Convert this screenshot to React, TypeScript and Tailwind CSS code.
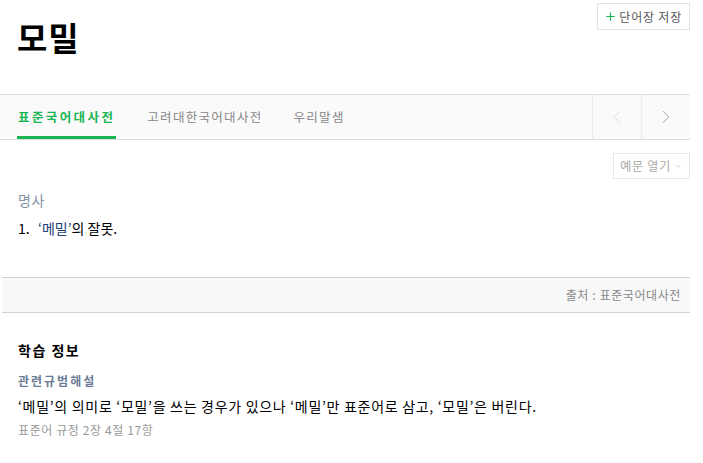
import { ChevronLeft, ChevronRight, ChevronDown, Plus } from 'lucide-react';

const font = { fontFamily: '"Noto Sans CJK KR", "Noto Sans", sans-serif' };

function App() {
    return (
        <div className="w-[690px] bg-white text-black" style={font}>
            {/* header */}
            <div className="h-[94px] relative">
                <h1 className="pl-[17px] pt-[13px] text-[33px] font-bold leading-[48px] tracking-[1px]">모밀</h1>
                <button className="absolute right-0 top-[3px] h-[27px] pl-[6px] pr-[7px] border border-[#e2e2e2] flex items-center gap-[2px] text-[12px] text-[#555] tracking-[0.8px]">
                    <Plus className="w-[13px] h-[13px] text-[#19b552]" strokeWidth={2} />
                    단어장 저장
                </button>
            </div>

            {/* tabs */}
            <div className="h-[46px] bg-[#fafafa] border-t border-b border-[#dedede] flex">
                <div className="flex pl-[17px] gap-[31px] flex-1">
                    <div className="relative flex items-center px-[1px] text-[12.5px] font-bold text-[#19b552] tracking-[2.4px]">
                        표준국어대사전
                        <div className="absolute left-0 right-0 bottom-0 h-[3px] bg-[#19b552]" />
                    </div>
                    <div className="flex items-center text-[12.5px] text-[#888] tracking-[1.3px]">고려대한국어대사전</div>
                    <div className="flex items-center text-[12.5px] text-[#888] tracking-[1.3px]">우리말샘</div>
                </div>
                <div className="flex">
                    <div className="w-[49px] border-l border-[#ececec] flex items-center justify-center">
                        <ChevronLeft className="w-[22px] h-[22px] text-[#dcdcdc]" strokeWidth={1} />
                    </div>
                    <div className="w-[49px] border-l border-[#ececec] flex items-center justify-center">
                        <ChevronRight className="w-[22px] h-[22px] text-[#999]" strokeWidth={1} />
                    </div>
                </div>
            </div>

            {/* body */}
            <div className="h-[137px] relative">
                <button className="absolute right-0 top-[13px] h-[26px] px-[6px] border border-[#e6e6e6] flex items-center gap-[2px] text-[12px] text-[#aaa] tracking-[0.8px]">
                    예문 열기
                    <ChevronDown className="w-[10px] h-[10px] text-[#bbb]" strokeWidth={1.5} />
                </button>
                <div className="pl-[18px] pt-[50px] text-[14px] text-[#8292a8] leading-[20px] tracking-[0.5px]">명사</div>
                <div className="pl-[18px] pt-[8px] text-[14px] leading-[20px] flex">
                    <span className="w-[20px]">1.</span>
                    <span><span className="text-[#1e3f78]">‘메밀’</span>의 잘못.</span>
                </div>
            </div>

            {/* source */}
            <div className="h-[36px] ml-[2px] bg-[#f8f8f8] border-t border-b border-[#d2d2d2] flex items-center justify-end pr-[9px] text-[12px] text-[#888] tracking-[0.6px]">
                출처 : 표준국어대사전
            </div>

            {/* study info */}
            <div className="pl-[18px] pt-[27px]">
                <div className="text-[14px] font-bold leading-[20px] tracking-[1.5px]">학습 정보</div>
                <div className="pt-[12px] text-[12px] font-bold text-[#6c7c96] leading-[18px] tracking-[2px]">관련규범해설</div>
                <div className="pt-[6px] text-[14px] leading-[20px] tracking-[0.7px]">‘메밀’의 의미로 ‘모밀’을 쓰는 경우가 있으나 ‘메밀’만 표준어로 삼고, ‘모밀’은 버린다.</div>
                <div className="pt-[5px] text-[12px] text-[#999] leading-[18px] tracking-[0.6px]">표준어 규정 2장 4절 17항</div>
            </div>
        </div>
    );
}

export default App;
